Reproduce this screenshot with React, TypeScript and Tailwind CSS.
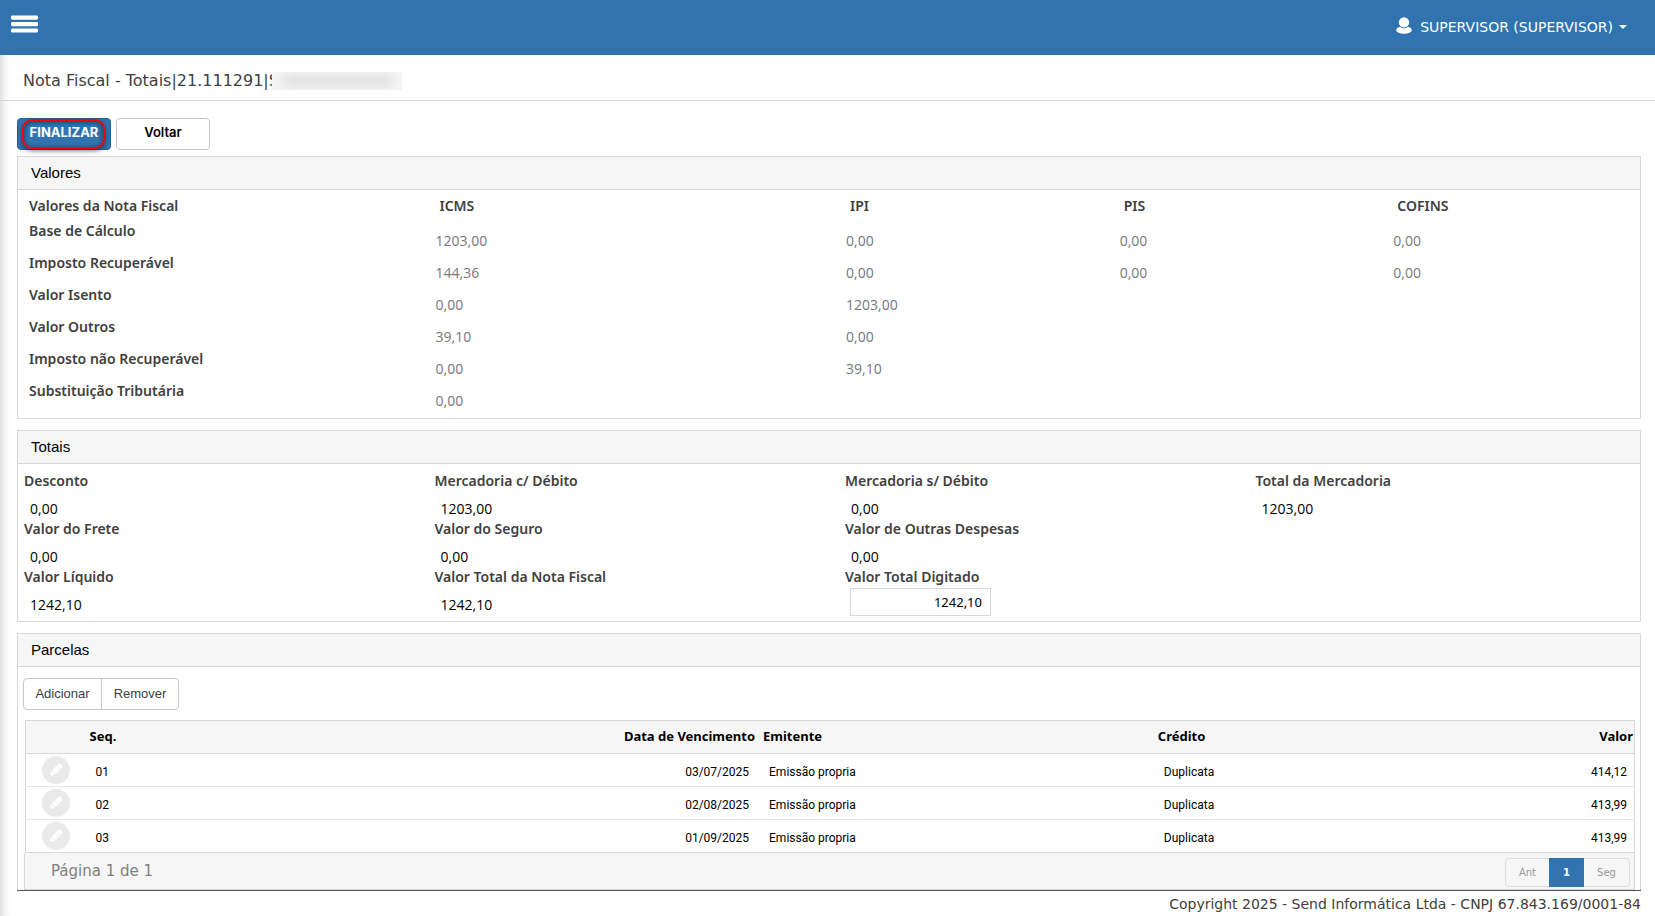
import { useState, type ReactNode } from "react";

const VALORES_ROWS: { label: string; cells: string[] }[] = [
  { label: "Base de Cálculo", cells: ["1203,00", "0,00", "0,00", "0,00"] },
  { label: "Imposto Recuperável", cells: ["144,36", "0,00", "0,00", "0,00"] },
  { label: "Valor Isento", cells: ["0,00", "1203,00", "", ""] },
  { label: "Valor Outros", cells: ["39,10", "0,00", "", ""] },
  { label: "Imposto não Recuperável", cells: ["0,00", "39,10", "", ""] },
  { label: "Substituição Tributária", cells: ["0,00", "", "", ""] },
];

const TOTAIS: { label: string; value: string }[][] = [
  [
    { label: "Desconto", value: "0,00" },
    { label: "Mercadoria c/ Débito", value: "1203,00" },
    { label: "Mercadoria s/ Débito", value: "0,00" },
    { label: "Total da Mercadoria", value: "1203,00" },
  ],
  [
    { label: "Valor do Frete", value: "0,00" },
    { label: "Valor do Seguro", value: "0,00" },
    { label: "Valor de Outras Despesas", value: "0,00" },
  ],
  [
    { label: "Valor Líquido", value: "1242,10" },
    { label: "Valor Total da Nota Fiscal", value: "1242,10" },
  ],
];

const PARCELAS = [
  { seq: "01", data: "03/07/2025", valor: "414,12" },
  { seq: "02", data: "02/08/2025", valor: "413,99" },
  { seq: "03", data: "01/09/2025", valor: "413,99" },
];

function UserIcon() {
  return (
    <svg viewBox="0 0 16 17" className="h-[17px] w-4" fill="#fff" aria-hidden="true">
      <ellipse cx="8" cy="13" rx="7.8" ry="3.8" />
      <circle cx="8" cy="5.6" r="5.9" fill="#3173af" />
      <circle cx="8" cy="5.4" r="5.2" />
    </svg>
  );
}

function PencilIcon() {
  return (
    <svg viewBox="0 0 14 14" className="h-[14px] w-[14px]" aria-hidden="true">
      <g transform="rotate(45 7 7)" fill="#fff">
        <path d="M4.4 1.2a1.8 1.8 0 0 1 1.8-1.8h1.6a1.8 1.8 0 0 1 1.8 1.8v9H4.4z" />
        <path d="M4.6 10.8h4.8l-.8 2.4a1.2 1.2 0 0 1-1.1.8h-1a1.2 1.2 0 0 1-1.1-.8z" />
        <path d="M7.8 2.4v5" stroke="#eaeaea" strokeWidth="0.8" />
      </g>
    </svg>
  );
}

function Panel({ title, children, open }: { title: string; children: ReactNode; open?: boolean }) {
  return (
    <section
      className={
        open
          ? "border border-b-0 border-[#d8d8d8]"
          : "mb-[11px] border border-[#d8d8d8]"
      }
    >
      <h2 className="flex h-[33px] items-center border-b border-[#d8d8d8] bg-[#f6f6f6] px-[13px] font-['Liberation_Sans',sans-serif] text-[15px] text-black">
        {title}
      </h2>
      {children}
    </section>
  );
}

const label = "text-sm leading-[18px] font-semibold text-[#404040] font-['Noto_Sans',sans-serif]";

export default function App() {
  const [digitado, setDigitado] = useState("1242,10");

  return (
    <div className="flex min-h-screen flex-col overflow-x-hidden bg-white font-['DejaVu_Sans',sans-serif] text-[#404040]">
      <header className="flex h-[55px] items-center justify-between bg-[#3173af] pr-7 pl-[11px]">
        <button type="button" aria-label="Menu" className="mb-[7px]">
          <svg viewBox="0 0 27 18" className="h-[18px] w-[27px]" fill="#fff" aria-hidden="true">
            <rect x="0" y="0.5" width="27" height="4.2" rx="1.4" />
            <rect x="0" y="7" width="27" height="4.2" rx="1.4" />
            <rect x="0" y="13.4" width="27" height="4.2" rx="1.4" />
          </svg>
        </button>
        <button type="button" className="flex items-center pb-px text-sm text-white">
          <span className="mr-2 mb-1">
            <UserIcon />
          </span>
          SUPERVISOR (SUPERVISOR)
          <svg viewBox="0 0 8 4" className="ml-[6px] h-1 w-2" fill="#fff" aria-hidden="true">
            <path d="M0 0h8L4 4z" />
          </svg>
        </button>
      </header>

      <main className="grow shadow-[inset_11px_0_9px_-9px_rgba(0,0,0,0.18)]">
        <h1 className="flex h-[46px] items-center border-b border-[#d8d8d8] pt-[6px] pl-[23px] text-base leading-5">
          Nota Fiscal - Totais|21.111291|S
          <span
            aria-hidden="true"
            className="relative -ml-[7px] flex h-[18px] w-[130px] items-center justify-center overflow-hidden bg-[#f6f6f6]"
          >
            <span className="h-[10px] w-[110px] bg-[#d9dadc] blur-[6px]" />
          </span>
        </h1>

        <div className="pt-[17px] pr-[14px] pl-[17px]">
          <div className="mb-[6px] flex gap-[5px] font-['Liberation_Sans',sans-serif]">
            <button
              type="button"
              className="relative h-8 w-[94px] rounded-[4px] border border-[#265f95] bg-[#3173af] pb-[2px] text-center font-['Inter',sans-serif] text-[13px] font-bold text-white"
            >
              FINALIZAR
              <span
                aria-hidden="true"
                className="absolute top-0 left-1 h-[30px] w-[83px] rounded-[10px] border-2 border-[#f5000c] shadow-[0_2px_4px_rgba(0,0,0,0.5),inset_0_1px_5px_rgba(0,0,0,0.5)]"
              />
            </button>
            <button
              type="button"
              className="h-8 w-[94px] rounded-[4px] border border-[#c8c8c8] bg-white pb-[2px] text-center font-['Inter',sans-serif] text-[13px] font-semibold text-black"
            >
              Voltar
            </button>
          </div>

          <Panel title="Valores">
            <div className="-mx-[10px] pt-[7px] pb-1">
              <div className="mb-[7px] grid grid-cols-12">
                <div className={`${label} col-span-3 pl-[21px]`}>Valores da Nota Fiscal</div>
                <div className={`${label} col-span-3 pl-[21px]`}>ICMS</div>
                <div className={`${label} col-span-2 pl-[21px]`}>IPI</div>
                <div className={`${label} col-span-2 pl-[21px]`}>PIS</div>
                <div className={`${label} col-span-2 pl-[21px]`}>COFINS</div>
              </div>
              {VALORES_ROWS.map((row) => (
                <div key={row.label} className="grid h-8 grid-cols-12">
                  <div className={`${label} col-span-3 pl-[21px]`}>{row.label}</div>
                  {row.cells.map((cell, i) => (
                    <div
                      key={i}
                      className={`${i === 0 ? "col-span-3" : "col-span-2"} pt-[10px] pl-[17px] font-['Open_Sans',sans-serif] text-sm leading-[18px] text-[#777]`}
                    >
                      {cell}
                    </div>
                  ))}
                </div>
              ))}
            </div>
          </Panel>

          <Panel title="Totais">
            <div className="-mx-[10px] pt-2 pb-[5px]">
              {TOTAIS.map((group, i) => (
                <div key={i} className="grid h-12 grid-cols-4">
                  {group.map((item) => (
                    <div key={item.label} className="pl-4">
                      <div className={label}>{item.label}</div>
                      <div className="pt-[10px] pl-[6px] font-['Open_Sans',sans-serif] text-sm leading-[18px] text-black">
                        {item.value}
                      </div>
                    </div>
                  ))}
                  {i === TOTAIS.length - 1 && (
                    <div className="pl-4">
                      <label htmlFor="valor-digitado" className={`${label} block`}>
                        Valor Total Digitado
                      </label>
                      <input
                        id="valor-digitado"
                        value={digitado}
                        onChange={(e) => setDigitado(e.target.value)}
                        className="mt-[2px] ml-[5px] block h-7 w-[141px] border border-[#d8d8d8] px-2 text-right font-['Noto_Sans',sans-serif] text-[13px] text-black"
                      />
                    </div>
                  )}
                </div>
              ))}
            </div>
          </Panel>

          <Panel title="Parcelas" open>
            <div className="pt-[11px] pr-[5px] pl-[6px]">
              <div className="-ml-px flex h-8 w-[156px] overflow-hidden rounded-[4px] border border-[#c8c8c8] font-['Liberation_Sans',sans-serif] text-[13px]">
                <button type="button" className="w-[78px] border-r border-[#c8c8c8] pb-px">
                  Adicionar
                </button>
                <button type="button" className="grow pb-px">
                  Remover
                </button>
              </div>

              <table className="mt-[10px] ml-px w-[calc(100%-1px)] table-fixed border-collapse border border-[#d8d8d8]">
                <colgroup>
                  <col className="w-[61px]" />
                  <col className="w-[20.9%]" />
                  <col className="w-[20.9%]" />
                  <col className="w-[24.6%]" />
                  <col />
                  <col className="w-[14%]" />
                </colgroup>
                <thead>
                  <tr className="h-[33px] border-b border-[#d8d8d8] bg-[#f6f6f6] font-['Noto_Sans',sans-serif] text-[13px] text-black">
                    <th aria-label="Editar" />
                    <th className="px-[3px] text-left font-bold">Seq.</th>
                    <th className="px-1 text-right font-bold">Data de Vencimento</th>
                    <th className="px-1 text-left font-bold">Emitente</th>
                    <th className="px-[3px] text-left font-bold">Crédito</th>
                    <th className="pr-px text-right font-bold">Valor</th>
                  </tr>
                </thead>
                <tbody className="font-['Roboto',sans-serif] text-xs text-black">
                  {PARCELAS.map((p) => (
                    <tr
                      key={p.seq}
                      className="h-[33px] border-b border-[#e8e8e8] last:border-[#d8d8d8]"
                    >
                      <td className="pl-4">
                        <button
                          type="button"
                          aria-label={`Editar parcela ${p.seq}`}
                          className="flex h-7 w-7 items-center justify-center rounded-full bg-[#eaeaea]"
                        >
                          <PencilIcon />
                        </button>
                      </td>
                      <td className="px-[9px] pt-1">{p.seq}</td>
                      <td className="px-[10px] pt-1 text-right">{p.data}</td>
                      <td className="px-[10px] pt-1">Emissão propria</td>
                      <td className="px-[9px] pt-1">Duplicata</td>
                      <td className="pt-1 pr-[7px] text-right">{p.valor}</td>
                    </tr>
                  ))}
                </tbody>
              </table>

              <div className="flex h-[37px] items-center justify-between border-x border-b border-[#d8d8d8] bg-[#f6f6f6] pr-1 pl-[26px]">
                <span className="text-[15px] text-[#808080]">Página 1 de 1</span>
                <nav
                  aria-label="Paginação"
                  className="mt-[3px] flex h-[29px] overflow-hidden rounded-[4px] text-[10px] text-[#999]"
                >
                  <button type="button" className="w-11 rounded-l-[4px] border border-r-0 border-[#ddd]">
                    Ant
                  </button>
                  <button type="button" className="w-[35px] bg-[#3173af] font-bold text-white">
                    1
                  </button>
                  <button type="button" className="w-[46px] rounded-r-[4px] border border-l-0 border-[#ddd]">
                    Seg
                  </button>
                </nav>
              </div>
            </div>
          </Panel>
          <footer className="border-t border-[#555] pt-1 text-right text-sm leading-[18px]">
            Copyright 2025 - Send Informática Ltda - CNPJ 67.843.169/0001-84
          </footer>
        </div>
      </main>
    </div>
  );
}
